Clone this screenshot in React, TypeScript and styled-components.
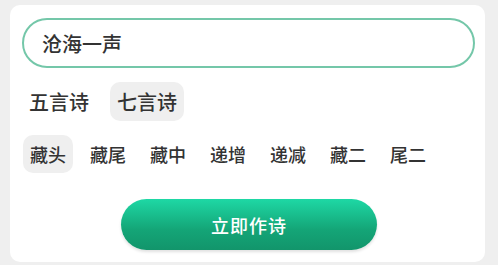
import React, { useState } from 'react';
import styled, { createGlobalStyle } from 'styled-components';

const Global = createGlobalStyle`
  html, body {
    margin: 0;
    padding: 0;
    background: #efefef;
    font-family: "Noto Sans CJK SC", "Noto Sans", sans-serif;
  }
`;

const Page = styled.div`
  width: 498px;
  height: 265px;
  padding: 5px 13px 3px 10px;
  box-sizing: border-box;
`;

const Card = styled.div`
  background: #fff;
  border-radius: 10px;
  height: 257px;
  box-sizing: border-box;
  padding: 13px 10px 0 12px;
  display: flex;
  flex-direction: column;
`;

const Input = styled.div`
  height: 50px;
  box-sizing: border-box;
  border: 2px solid #74c7a9;
  border-radius: 25px;
  padding-left: 18px;
  display: flex;
  align-items: center;
  font-size: 20px;
  font-weight: 500;
  color: #333;
`;

const Row = styled.div<{ $gap: number; $top: number; $left?: number }>`
  display: flex;
  gap: ${p => p.$gap}px;
  margin-top: ${p => p.$top}px;
  padding-left: ${p => p.$left ?? 0}px;
`;

const Chip = styled.div<{ $active?: boolean; $size: number; $h: number; $pad: number }>`
  height: ${p => p.$h}px;
  padding: 0 ${p => p.$pad}px;
  display: flex;
  align-items: center;
  border-radius: 10px;
  font-size: ${p => p.$size}px;
  font-weight: 500;
  color: #333;
  background: ${p => (p.$active ? '#efefef' : 'transparent')};
  cursor: pointer;
`;

const Button = styled.button`
  align-self: center;
  margin: 26px 0 0 1px;
  width: 256px;
  height: 51px;
  border: none;
  border-radius: 26px;
  background: linear-gradient(180deg, #1ed8a5 0%, #14a577 60%, #12956b 100%);
  box-shadow: 0 2px 3px rgba(0, 0, 0, 0.12);
  color: #fff;
  font-size: 18px;
  font-family: inherit;
  font-weight: 500;
  letter-spacing: 1px;
`;

const lengths = ['五言诗', '七言诗'];
const modes = ['藏头', '藏尾', '藏中', '递增', '递减', '藏二', '尾二'];

export default function App() {
  const [len, setLen] = useState(1);
  const [mode, setMode] = useState(0);
  return (
    <>
      <Global />
      <Page>
        <Card>
          <Input>沧海一声</Input>
          <Row $gap={14} $top={14}>
            {lengths.map((l, i) => (
              <Chip key={l} $size={20} $h={39} $pad={7} $active={i === len} onClick={() => setLen(i)}>
                {l}
              </Chip>
            ))}
          </Row>
          <Row $gap={10} $top={14} $left={1}>
            {modes.map((m, i) => (
              <Chip key={m} $size={18} $h={38} $pad={7} $active={i === mode} onClick={() => setMode(i)}>
                {m}
              </Chip>
            ))}
          </Row>
          <Button>立即作诗</Button>
        </Card>
      </Page>
    </>
  );
}
